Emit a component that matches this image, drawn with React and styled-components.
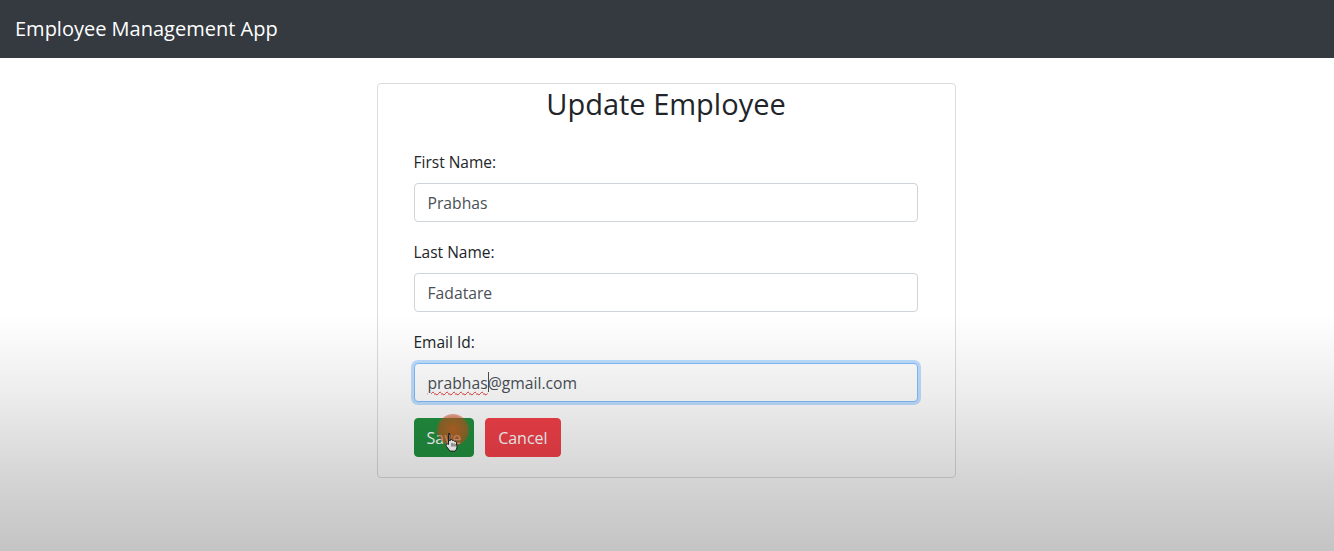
import React from "react";
import styled, { createGlobalStyle } from "styled-components";

const Global = createGlobalStyle`
  html, body { margin: 0; padding: 0; background: #fff; }
  body {
    font-family: "Open Sans", "Noto Sans", "Liberation Sans", sans-serif;
    color: #212529;
    -webkit-font-smoothing: antialiased;
  }
  * { box-sizing: border-box; }
`;

const Page = styled.div`
  position: relative;
  width: 1334px;
  height: 551px;
  overflow: hidden;
  background: #fff;
`;

const NavBar = styled.header`
  height: 58px;
  background: #343a40;
  display: flex;
  align-items: center;
  padding: 0 15px;
`;

const Brand = styled.span`
  color: #fff;
  font-size: 20px;
  padding-bottom: 1px;
`;

const Main = styled.main`
  display: flex;
  justify-content: center;
  padding-top: 25px;
`;

const Card = styled.section`
  width: 579px;
  margin-left: -2px;
  border: 1px solid #dcdcdc;
  border-radius: 4px;
  background: #fff;
  display: flex;
  flex-direction: column;
`;

const Title = styled.h2`
  margin: 0;
  padding-top: 1px;
  text-align: center;
  font-size: 29px;
  font-weight: 500;
  line-height: 38px;
  color: #212529;
`;

const Body = styled.form`
  padding: 27px 37px 20px 36px;
  display: flex;
  flex-direction: column;
`;

const Group = styled.div`
  display: flex;
  flex-direction: column;
  margin-bottom: ${(p) => (p.$last ? "16px" : "18px")};
`;

const Label = styled.label`
  font-size: 15.5px;
  line-height: 24px;
  margin-bottom: 9px;
  color: #212529;
`;

const FieldWrap = styled.div`
  position: relative;
`;

const Input = styled.input`
  width: 100%;
  height: 39px;
  padding: 6px 13px;
  font-family: inherit;
  font-size: 15.7px;
  color: #495057;
  background: #fff;
  border: 1px solid ${(p) => (p.$focused ? "#80bdff" : "#ced4da")};
  border-radius: 4px;
  outline: none;
  box-shadow: ${(p) => (p.$focused ? "0 0 0 3px rgba(0,123,255,.25)" : "none")};
`;

const Misspelled = styled.span`
  position: absolute;
  left: 14px;
  top: 9px;
  font-size: 15.7px;
  line-height: 20px;
  color: transparent;
  text-decoration: underline wavy #d33;
  text-decoration-thickness: 1px;
  text-underline-offset: 3px;
  border-right: 1px solid #495057;
  pointer-events: none;
`;

const Actions = styled.div`
  display: flex;
  gap: 11px;
`;

const Button = styled.button`
  height: 39px;
  padding: 0 12px;
  font-family: inherit;
  font-size: 16px;
  color: #fff;
  border: 1px solid ${(p) => p.$bg};
  background: ${(p) => p.$bg};
  border-radius: 4px;
  cursor: pointer;
`;

const SaveWrap = styled.div`
  position: relative;
`;

const Ripple = styled.span`
  position: absolute;
  left: 23px;
  top: -4px;
  width: 32px;
  height: 32px;
  border-radius: 50%;
  background: radial-gradient(circle, rgba(222, 90, 30, 0.8) 0%, rgba(210, 80, 30, 0.6) 60%, rgba(210, 80, 30, 0) 100%);
  pointer-events: none;
`;

const Hand = styled.svg`
  position: absolute;
  left: 30px;
  top: 14px;
  pointer-events: none;
`;

const Shade = styled.div`
  position: absolute;
  inset: 0;
  pointer-events: none;
  background: linear-gradient(
    to bottom,
    rgba(0, 0, 0, 0) 0px,
    rgba(0, 0, 0, 0) 315px,
    rgba(0, 0, 0, 0.08) 400px,
    rgba(0, 0, 0, 0.17) 480px,
    rgba(0, 0, 0, 0.23) 551px
  );
`;

export default function App() {
  return (
    <>
      <Global />
      <Page>
        <NavBar>
          <Brand>Employee Management App</Brand>
        </NavBar>
        <Main>
          <Card>
            <Title>Update Employee</Title>
            <Body onSubmit={(e) => e.preventDefault()}>
              <Group>
                <Label>First Name:</Label>
                <Input defaultValue="Prabhas" name="firstName" />
              </Group>
              <Group>
                <Label>Last Name:</Label>
                <Input defaultValue="Fadatare" name="lastName" />
              </Group>
              <Group $last>
                <Label>Email Id:</Label>
                <FieldWrap>
                  <Input $focused defaultValue="prabhas@gmail.com" name="emailId" />
                  <Misspelled aria-hidden="true">prabhas</Misspelled>
                </FieldWrap>
              </Group>
              <Actions>
                <SaveWrap>
                  <Button type="submit" $bg="#22903f">Save</Button>
                  <Ripple />
                  <Hand width="16" height="20" viewBox="0 0 16 20">
                    <path
                      d="M4.5 1.5c.8 0 1.4.6 1.4 1.4v6.2l.2-1.3c.6-.6 1.7-.5 2.1.3l.2.5c.6-.5 1.6-.3 1.9.4l.2.4c.6-.4 1.6-.1 1.8.7l.6 3.5c.3 1.6-.1 3.2-1 4.5l-.7 1H6l-3.6-4.8c-.5-.7-.4-1.6.2-2.1.6-.4 1.400-.3 1.9.2V2.9c0-.8.6-1.4 1.4-1.4z"
                      fill="#fff"
                      stroke="#222"
                      strokeWidth="1"
                      strokeLinejoin="round"
                    />
                    <path d="M8 11v3.5M10 11.5v3M12 12v2.5" stroke="#222" strokeWidth="0.8" />
                  </Hand>
                </SaveWrap>
                <Button type="button" $bg="#f4414a">Cancel</Button>
              </Actions>
            </Body>
          </Card>
        </Main>
        <Shade />
      </Page>
    </>
  );
}
